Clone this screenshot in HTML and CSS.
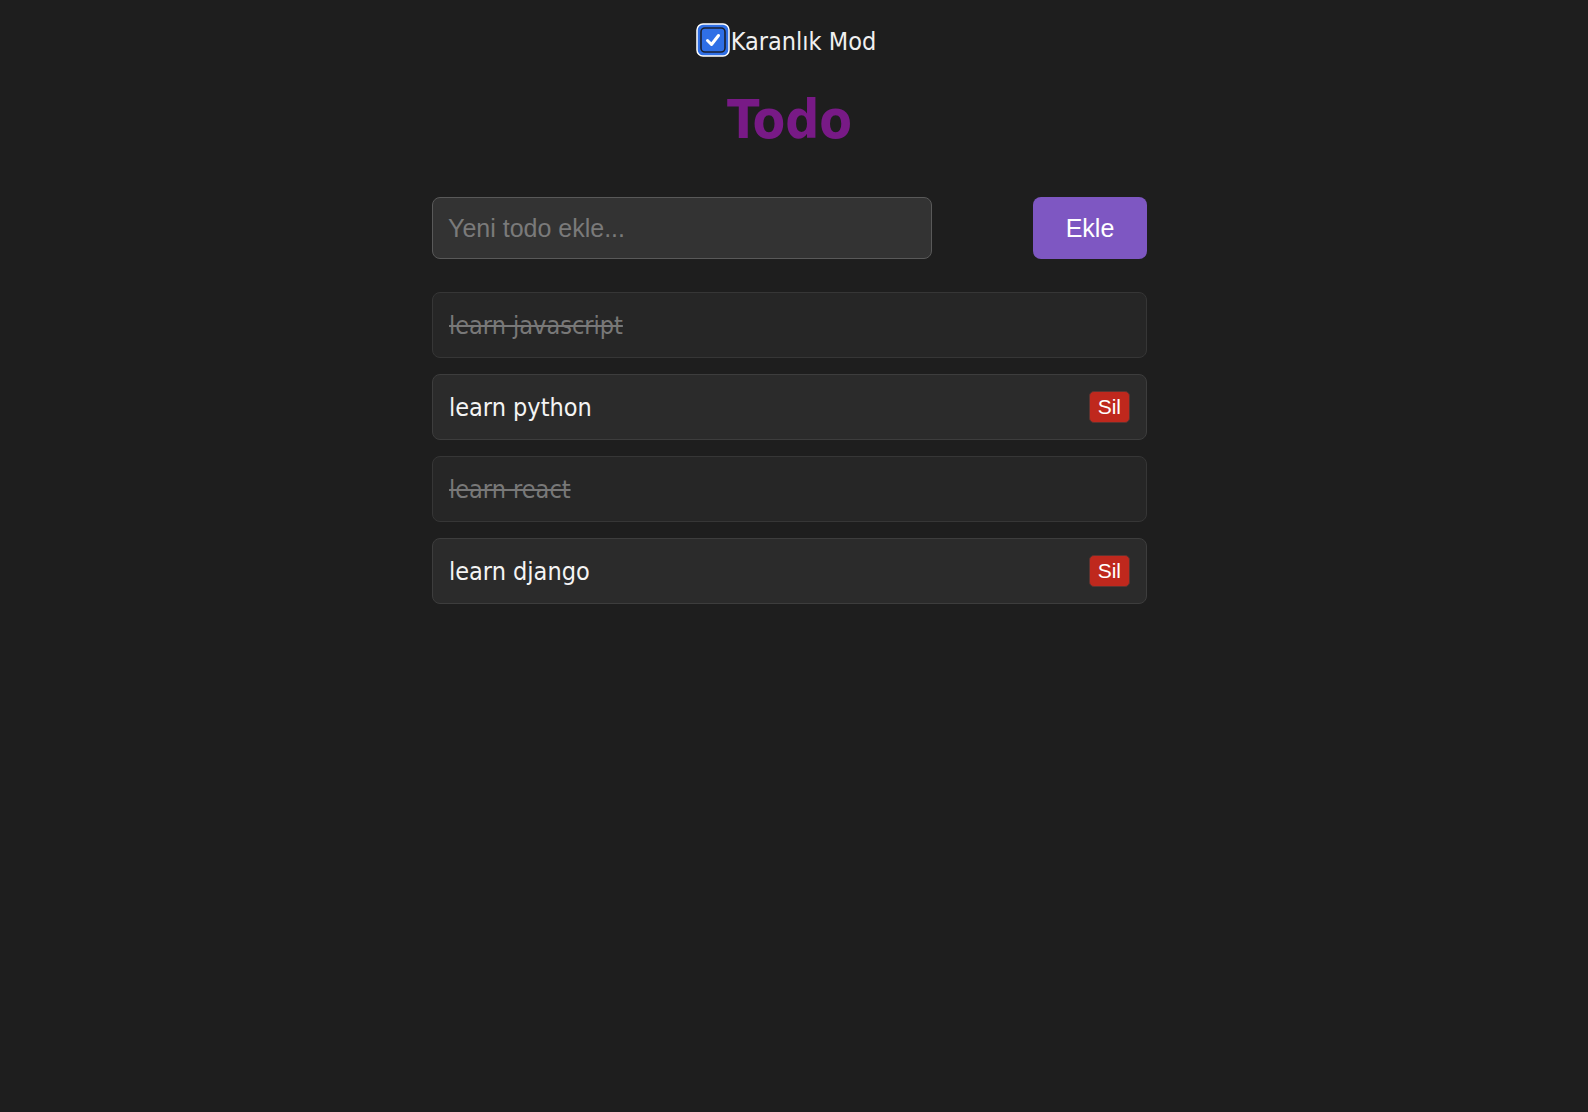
FILE: index.html
```html
<!DOCTYPE html>
<html lang="tr">
<head>
<meta charset="utf-8">
<title>Todo</title>
<link rel="stylesheet" href="styles.css">
</head>
<body>
<div class="page">
  <label class="toggle">
    <span class="check">
      <svg width="34" height="34" viewBox="0 0 34 34">
        <rect x="1" y="1" width="32" height="32" rx="6" fill="#2f6fe6" stroke="#ffffff" stroke-width="1.5"/>
        <rect x="5" y="5" width="24" height="24" rx="4" fill="#2f6fe6" stroke="#1b2130" stroke-width="1.6"/>
        <path d="M11.5 17.5 L15.5 21.5 L22.5 12.5" fill="none" stroke="#ffffff" stroke-width="3" stroke-linecap="round" stroke-linejoin="round"/>
      </svg>
    </span>
    <span class="toggle-text">Karanlık Mod</span>
  </label>

  <h1 class="title">Todo</h1>

  <div class="app">
    <form class="add-form">
      <input class="add-input" type="text" placeholder="Yeni todo ekle...">
      <button class="add-btn" type="button">Ekle</button>
    </form>

    <ul class="list">
      <li class="item done"><span class="item-text">learn javascript</span></li>
      <li class="item"><span class="item-text">learn python</span><button class="del-btn" type="button">Sil</button></li>
      <li class="item done"><span class="item-text">learn react</span></li>
      <li class="item"><span class="item-text">learn django</span><button class="del-btn" type="button">Sil</button></li>
    </ul>
  </div>
</div>
</body>
</html>
```
FILE: styles.css
```css
html, body {
  margin: 0;
  padding: 0;
  background: #1e1e1e;
}
body {
  font-family: "DejaVu Sans Condensed", "DejaVu Sans", sans-serif;
  color: #f2f2f2;
  min-height: 1112px;
}
.page {
  padding-right: 9px;
  padding-top: 23px;
}
.toggle {
  display: flex;
  justify-content: center;
  align-items: center;
  gap: 1px;
  height: 34px;
  padding-right: 7px;
}
.check {
  display: block;
  width: 34px;
  height: 34px;
}
.check svg {
  display: block;
}
.toggle-text {
  font-size: 25px;
  color: #f0f0f0;
  line-height: 34px;
  padding-top: 3px;
}
.title {
  margin: 31px 0 0;
  text-align: center;
  font-size: 53px;
  line-height: 64px;
  font-weight: bold;
  color: #781a86;
}
.app {
  width: 715px;
  margin: 0 auto;
}
.add-form {
  margin: 45px 0 0;
  display: flex;
  justify-content: space-between;
  align-items: center;
}
.add-input {
  box-sizing: border-box;
  width: 500px;
  height: 62px;
  padding: 0 15px;
  background: #333333;
  border: 1px solid #595959;
  border-radius: 8px;
  color: #eeeeee;
  font-family: "Liberation Sans", Arial, sans-serif;
  font-size: 25px;
  outline: none;
}
.add-input::placeholder {
  color: #7a7a7a;
}
.add-btn {
  box-sizing: border-box;
  width: 114px;
  height: 62px;
  border: none;
  border-radius: 8px;
  background: #7e57c2;
  color: #ffffff;
  font-family: "Liberation Sans", Arial, sans-serif;
  font-size: 25px;
  padding: 0;
}
.list {
  list-style: none;
  margin: 33px 0 0;
  padding: 0;
  display: flex;
  flex-direction: column;
  gap: 16px;
}
.item {
  box-sizing: border-box;
  height: 66px;
  display: flex;
  align-items: center;
  justify-content: space-between;
  padding: 0 16px;
  background: #2b2b2b;
  border: 1px solid #3d3d3d;
  border-radius: 8px;
}
.item-text {
  font-size: 25px;
  color: #f4f4f4;
}
.item.done {
  background: #262626;
  border-color: #363636;
}
.item.done .item-text {
  color: #787878;
  text-decoration: line-through;
}
.del-btn {
  box-sizing: border-box;
  height: 32px;
  padding: 0 8px;
  background: #bf281d;
  border: 1px solid #5a3431;
  border-radius: 5px;
  color: #ffffff;
  font-family: "Liberation Sans", Arial, sans-serif;
  font-size: 21px;
}
```
